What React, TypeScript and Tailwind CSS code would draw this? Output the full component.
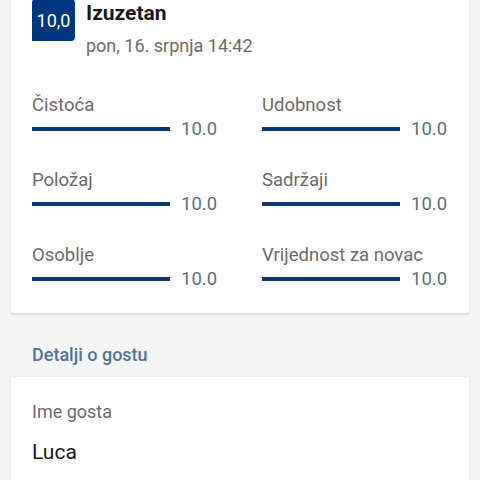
import React from "react";

const ratings = [
  { label: "Čistoća", value: "10.0" },
  { label: "Udobnost", value: "10.0" },
  { label: "Položaj", value: "10.0" },
  { label: "Sadržaji", value: "10.0" },
  { label: "Osoblje", value: "10.0" },
  { label: "Vrijednost za novac", value: "10.0" },
];

function RatingBar({ label, value }: { label: string; value: string }) {
  return (
    <div className="flex flex-col">
      <div className="h-6 leading-6 text-[18.5px] text-[#6b6b6b]">{label}</div>
      <div className="h-6 flex items-center gap-[11px]">
        <div className="flex-1 h-[4px] bg-[#0b3677]"></div>
        <span className="w-[37px] text-[18.5px] leading-6 text-[#5a6e86]">{value}</span>
      </div>
    </div>
  );
}

export default function App() {
  return (
    <div
      className="min-h-[480px] bg-[#f5f5f5] overflow-hidden"
      style={{ fontFamily: "Roboto, 'Noto Sans', sans-serif" }}
    >
      {/* review card */}
      <section className="mx-[11px] -mt-[6px] bg-white rounded-[3px] shadow-[0_1px_3px_rgba(0,0,0,0.15)] px-[21px] pt-[4px] pb-[22px]">
        <div className="flex gap-[11px]">
          <div className="w-[43px] h-[42px] bg-[#003580] rounded-t-[4px] rounded-br-[4px] flex items-center justify-center text-white text-[18px] mt-px">
            10,0
          </div>
          <div className="flex flex-col">
            <div className="h-[30px] leading-[30px] text-[21px] font-bold text-[#1a1a1a]">Izuzetan</div>
            <div className="mt-[6px] h-6 leading-6 text-[18px] text-[#6b6b6b]">pon, 16. srpnja 14:42</div>
          </div>
        </div>
        <div className="mt-[35px] grid grid-cols-2 gap-x-[44px] gap-y-[27px]">
          {ratings.map((r) => (
            <RatingBar key={r.label} label={r.label} value={r.value} />
          ))}
        </div>
      </section>

      <h3 className="px-[32px] pt-[30px] pb-[10px] h-6 leading-6 box-content text-[18px] font-medium text-[#51729b]">
        Detalji o gostu
      </h3>

      <section className="mx-[11px] bg-white rounded-[3px] shadow-[0_1px_3px_rgba(0,0,0,0.15)] px-[21px] pt-[23px] pb-[20px]">
        <div className="h-6 leading-6 text-[18px] text-[#6b6b6b]">Ime gosta</div>
        <div className="mt-[14px] h-7 leading-7 text-[21px] text-[#1a1a1a]">Luca</div>
      </section>
    </div>
  );
}
